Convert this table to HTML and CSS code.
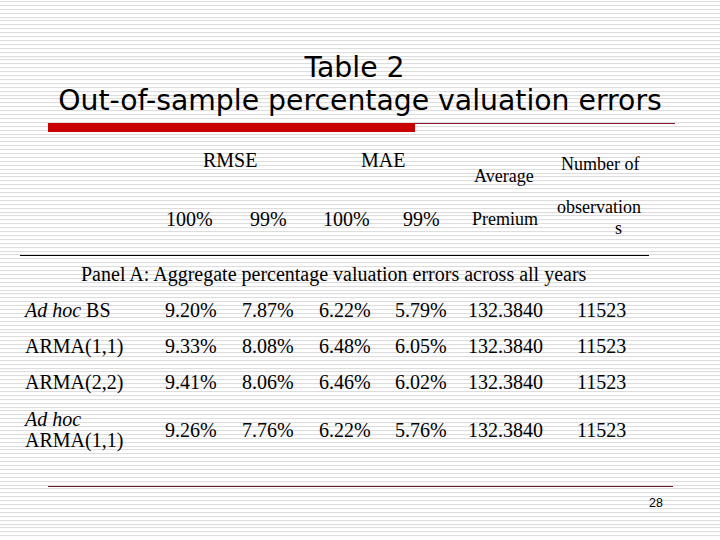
FILE: index.html
```html
<!DOCTYPE html>
<html>
<head>
<meta charset="utf-8">
<link rel="stylesheet" href="styles.css">
</head>
<body>
<div class="slide">
  <div class="title">
    <div class="title-first">Table 2</div>
    <div>Out-of-sample percentage valuation errors</div>
  </div>
  <div class="accent"><div class="accent-bar"></div><div class="accent-line"></div></div>

  <div class="thead">
    <div class="h-label"></div>
    <div class="h-group h-rmse">
      <div class="h-title">RMSE</div>
      <div class="h-sub-row"><div class="h-sub s1">100%</div><div class="h-sub s2">99%</div></div>
    </div>
    <div class="h-group h-mae">
      <div class="h-title">MAE</div>
      <div class="h-sub-row"><div class="h-sub s1">100%</div><div class="h-sub s2">99%</div></div>
    </div>
    <div class="h-prem">
      <div class="avg">Average</div>
      <div class="prem">Premium</div>
    </div>
    <div class="h-obs">
      <div class="num">Number of</div>
      <div class="obs">observation</div>
      <div class="obs-s">s</div>
    </div>
  </div>
  <div class="rule"></div>

  <div class="panel">Panel A: Aggregate percentage valuation errors across all years</div>

  <div class="tbody">
    <div class="row">
      <div class="label"><em>Ad hoc</em> BS</div>
      <div>9.20%</div><div>7.87%</div><div>6.22%</div><div>5.79%</div><div>132.3840</div><div>11523</div>
    </div>
    <div class="row">
      <div class="label">ARMA(1,1)</div>
      <div>9.33%</div><div>8.08%</div><div>6.48%</div><div>6.05%</div><div>132.3840</div><div>11523</div>
    </div>
    <div class="row">
      <div class="label">ARMA(2,2)</div>
      <div>9.41%</div><div>8.06%</div><div>6.46%</div><div>6.02%</div><div>132.3840</div><div>11523</div>
    </div>
    <div class="row row-tall">
      <div class="label"><em>Ad hoc</em><br>ARMA(1,1)</div>
      <div>9.26%</div><div>7.76%</div><div>6.22%</div><div>5.76%</div><div>132.3840</div><div>11523</div>
    </div>
  </div>

  <div class="foot-line"></div>
  <div class="page-num">28</div>
</div>
</body>
</html>
```

FILE: styles.css
```css
html, body {
  margin: 0;
  padding: 0;
  background: #ffffff;
}

.slide {
  width: 720px;
  height: 540px;
  overflow: hidden;
  color: #000000;
  background-color: #ffffff;
  background-image: repeating-linear-gradient(to bottom, #ffffff 0px, #ffffff 2.9px, #d9d9d9 2.9px, #d9d9d9 3.9px);
  background-position: 0 -1.9px;
  font-family: "Liberation Serif", "Times New Roman", serif;
}

.title {
  padding-top: 51px;
  font-family: "DejaVu Sans", Verdana, sans-serif;
  font-size: 28.3px;
  line-height: 33px;
  text-align: center;
}

.title-first {
  padding-right: 11px;
}

.accent {
  display: flex;
  align-items: flex-start;
  margin: 6px 0 0 48px;
  width: 627px;
  height: 9px;
}

.accent-bar {
  width: 367px;
  height: 9px;
  background: #c80000;
}

.accent-line {
  flex: 1;
  height: 1px;
  background: #8a1a26;
}

.thead {
  display: flex;
  padding: 16px 0 0 25px;
  font-size: 20px;
  line-height: 24px;
}

.h-label {
  width: 140px;
}

.h-group {
  display: flex;
  flex-direction: column;
}

.h-rmse { width: 154px; }
.h-mae { width: 148px; }

.h-sub-row {
  display: flex;
  margin-top: 35px;
}

.h-sub { width: 77px; }
.h-sub.s2 { width: auto; }

.h-rmse .h-title { padding-left: 38px; }
.h-rmse .s1 { padding-left: 1px; width: 76px; }
.h-rmse .s2 { padding-left: 8px; }

.h-mae .h-title { padding-left: 42px; }
.h-mae .s1 { padding-left: 4px; width: 73px; }
.h-mae .s2 { padding-left: 7px; }

.h-prem {
  width: 90px;
  font-size: 18px;
  line-height: 22px;
}

.avg {
  margin-top: 17px;
  padding-left: 7px;
}

.prem {
  margin-top: 21px;
  padding-left: 5px;
}

.h-obs {
  font-size: 18px;
  line-height: 21px;
}

.num {
  margin-top: 6px;
  padding-left: 4px;
}

.obs {
  margin-top: 22px;
}

.obs-s {
  padding-left: 58px;
}

.rule {
  margin: 16px 0 0 20px;
  width: 629px;
  height: 1px;
  background: #000000;
}

.panel {
  margin-top: 6px;
  padding-left: 81px;
  font-size: 20px;
  line-height: 24px;
}

.tbody {
  margin-top: 6px;
  padding-left: 25px;
  font-size: 20px;
}

.row {
  display: grid;
  grid-template-columns: 140px 77px 77px 76px 73px 109px 1fr;
  line-height: 36px;
}

.row-tall {
  padding-top: 9px;
  align-items: center;
  line-height: 21px;
}

.foot-line {
  margin: 35px 0 0 48px;
  width: 625px;
  height: 1px;
  background: #6e1a2c;
}

.page-num {
  margin-top: 9px;
  padding-right: 57px;
  text-align: right;
  font-family: "Liberation Sans", Arial, sans-serif;
  font-size: 12.5px;
  line-height: 14px;
}
```
